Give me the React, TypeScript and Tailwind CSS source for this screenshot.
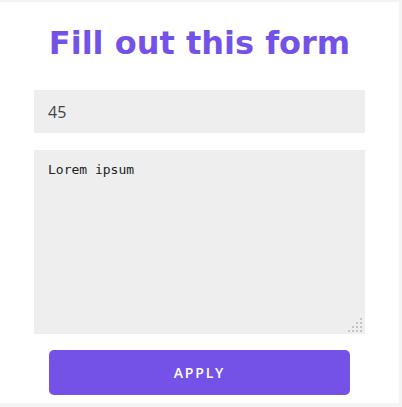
import React from "react";

function ResizeDots() {
  const dots: [number, number][] = [];
  for (let r = 0; r < 4; r++) {
    for (let c = 3 - r; c < 4; c++) {
      dots.push([c * 4, r * 4]);
    }
  }
  return (
    <svg width="16" height="16" viewBox="0 0 16 16" className="absolute right-[1px] bottom-[0px] pointer-events-none">
      {dots.map(([x, y], i) => (
        <rect key={i} x={x} y={y} width="2" height="2" fill="#c4c4c4" />
      ))}
    </svg>
  );
}

export default function App() {
  return (
    <div className="w-[402px] h-[407px] bg-[#f4f4f4] pt-[2px]" style={{ fontFamily: '"DejaVu Sans", sans-serif' }}>
      <div className="w-[399px] h-[401px] bg-white flex flex-col">
        <h1 className="h-[88px] flex items-center justify-center text-[32px] font-bold text-[#7452e8] pb-[6px]">
          Fill out this form
        </h1>
        <div className="pl-[34px] w-[365px]">
          <input
            defaultValue="45"
            className="w-[331px] h-[43px] bg-[#eeeeee] px-[14px] text-[16px] text-[#444] outline-none"
            style={{ fontFamily: '"Open Sans", sans-serif' }}
          />
          <div className="relative mt-[17px] w-[331px] h-[184px]">
            <textarea
              defaultValue="Lorem ipsum"
              autoFocus
              className="block w-full h-full resize-none bg-[#eeeeee] px-[14px] py-[10px] text-[13px] text-[#222] outline-none"
              style={{ fontFamily: '"DejaVu Sans Mono", monospace' }}
            />
            <ResizeDots />
          </div>
        </div>
        <div className="pl-[49px] mt-[16px]">
          <button
            className="w-[301px] h-[45px] bg-[#7452e8] rounded-[5px] text-white text-[14px] font-semibold tracking-[1.8px]"
            style={{ fontFamily: '"Open Sans", sans-serif' }}
          >
            APPLY
          </button>
        </div>
      </div>
    </div>
  );
}
